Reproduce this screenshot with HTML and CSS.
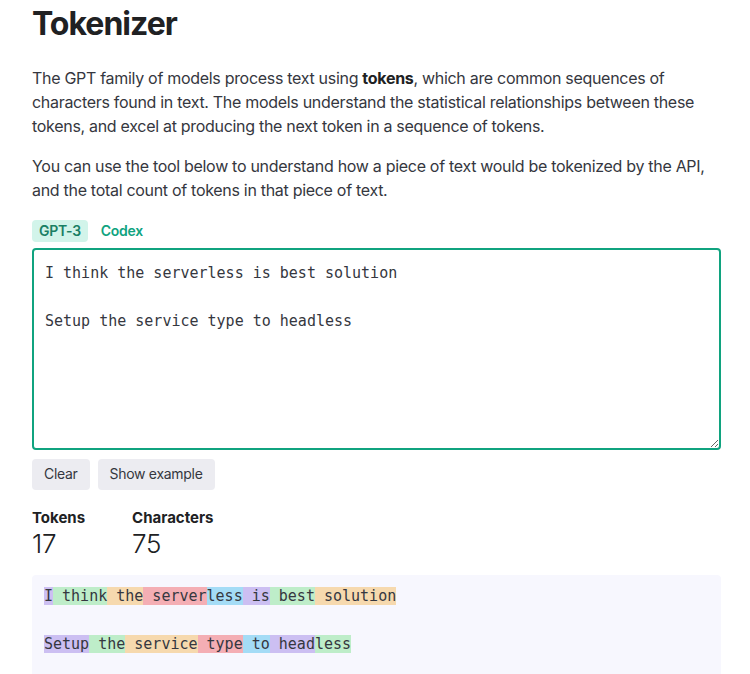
FILE: index.html
```html
<!DOCTYPE html>
<html lang="en">
<head>
<meta charset="utf-8">
<title>Tokenizer</title>
<link rel="stylesheet" href="styles.css">
</head>
<body>
<main class="page">
  <h1 class="title">Tokenizer</h1>
  <p class="intro">The GPT family of models process text using <strong>tokens</strong>, which are common sequences of characters found in text. The models understand the statistical relationships between these tokens, and excel at producing the next token in a sequence of tokens.</p>
  <p class="intro">You can use the tool below to understand how a piece of text would be tokenized by the API, and the total count of tokens in that piece of text.</p>
  <div class="tabs">
    <span class="tab tab-active">GPT-3</span>
    <span class="tab">Codex</span>
  </div>
  <textarea class="input" spellcheck="false">I think the serverless is best solution

Setup the service type to headless</textarea>
  <div class="actions">
    <button class="btn" type="button">Clear</button>
    <button class="btn" type="button">Show example</button>
  </div>
  <div class="stats">
    <div class="stat">
      <div class="stat-label">Tokens</div>
      <div class="stat-value">17</div>
    </div>
    <div class="stat">
      <div class="stat-label">Characters</div>
      <div class="stat-value">75</div>
    </div>
  </div>
  <div class="tokens"><span class="t t0">I</span><span class="t t1"> think</span><span class="t t2"> the</span><span class="t t3"> server</span><span class="t t4">less</span><span class="t t0"> is</span><span class="t t1"> best</span><span class="t t2"> solution</span>
<span class="t t3"></span>
<span class="t t4"></span><span class="t t0">Setup</span><span class="t t1"> the</span><span class="t t2"> service</span><span class="t t3"> type</span><span class="t t4"> to</span><span class="t t0"> head</span><span class="t t1">less</span></div>
</main>
</body>
</html>
```

FILE: styles.css
```css
* { box-sizing: border-box; }
html, body { margin: 0; padding: 0; background: #fff; }
body {
  font-family: Inter, "Noto Sans", "Liberation Sans", sans-serif;
  color: #353740;
  letter-spacing: -0.3px;
}
.page {
  width: 750px;
  padding: 0 30px 0 32px;
}
.title {
  margin: 0;
  padding-top: 4px;
  font-size: 32px;
  line-height: 40px;
  font-weight: 700;
  color: #202123;
  letter-spacing: -1px;
}
.intro {
  margin: 22px 0 0;
  font-size: 16px;
  line-height: 24px;
}
.intro + .intro { margin-top: 16px; }
.intro strong { font-weight: 700; color: #202123; }
.tabs {
  display: flex;
  gap: 6px;
  margin-top: 18px;
}
.tab {
  font-size: 14px;
  font-weight: 600;
  line-height: 22px;
  padding: 0 7px;
  border-radius: 4px;
  color: #10a37f;
}
.tab-active {
  background: #d2f4ea;
  color: #1a7f64;
}
.input {
  display: block;
  width: 689px;
  height: 202px;
  margin-top: 6px;
  padding: 11px 12px 10px 11px;
  border: 2px solid #10a37f;
  border-radius: 4px;
  font-family: "DejaVu Sans Mono", "Liberation Mono", monospace;
  font-size: 15px;
  line-height: 24px;
  letter-spacing: 0;
  color: #353740;
  resize: vertical;
  outline: none;
}
.actions {
  display: flex;
  gap: 8px;
  margin-top: 9px;
}
.btn {
  font-family: inherit;
  font-size: 14px;
  line-height: 20px;
  letter-spacing: -0.3px;
  padding: 5px 12px 6px;
  border: 0;
  border-radius: 4px;
  background: #ececf1;
  color: #353740;
}
.stats {
  display: flex;
  gap: 47px;
  margin-top: 18px;
}
.stat-label {
  font-size: 15px;
  font-weight: 700;
  line-height: 20px;
  letter-spacing: 0;
  color: #202123;
}
.stat-value {
  font-size: 26px;
  font-weight: 300;
  line-height: 32px;
  color: #202123;
}
.tokens {
  margin-top: 15px;
  width: 689px;
  min-height: 120px;
  padding: 9px 12px 8px;
  background: #f7f7fe;
  border-radius: 4px;
  white-space: pre-wrap;
  font-family: "DejaVu Sans Mono", "Liberation Mono", monospace;
  font-size: 15px;
  line-height: 24px;
  letter-spacing: 0;
  color: #353740;
}
.t0 { background: rgba(107, 64, 216, 0.3); }
.t1 { background: rgba(104, 222, 122, 0.4); }
.t2 { background: rgba(244, 172, 54, 0.4); }
.t3 { background: rgba(239, 65, 70, 0.4); }
.t4 { background: rgba(39, 181, 234, 0.4); }
```
